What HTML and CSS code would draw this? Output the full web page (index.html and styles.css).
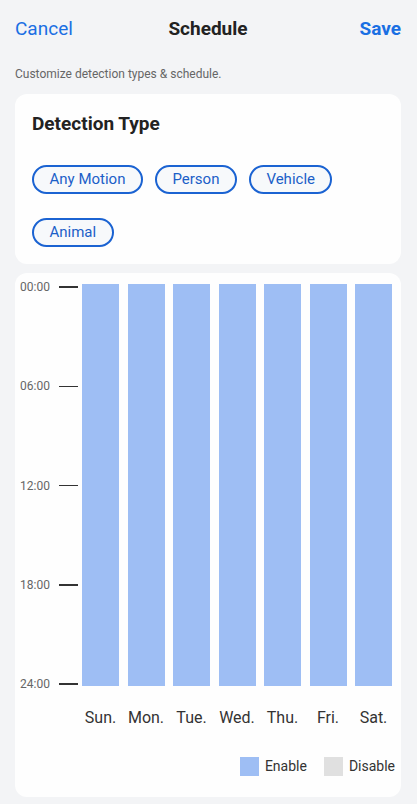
FILE: index.html
```html
<!DOCTYPE html>
<html lang="en">
<head>
  <meta charset="UTF-8">
  <meta name="viewport" content="width=device-width, initial-scale=1.0">
  <title>Schedule</title>
  <link rel="stylesheet" href="styles.css">
</head>
<body>
  <div class="header">
    <span class="header-btn">Cancel</span>
    <span class="header-title">Schedule</span>
    <span class="header-btn save">Save</span>
  </div>
  <p class="subtitle">Customize detection types &amp; schedule.</p>

  <div class="card detection">
    <h2>Detection Type</h2>
    <div class="chips">
      <span class="chip">Any Motion</span>
      <span class="chip">Person</span>
      <span class="chip">Vehicle</span>
      <span class="chip">Animal</span>
    </div>
  </div>

  <div class="card schedule">
    <div class="chart">
      <div class="axis">
        <div class="axis-row"><span class="axis-label">00:00</span><span class="tick"></span></div>
        <div class="axis-row"><span class="axis-label">06:00</span><span class="tick"></span></div>
        <div class="axis-row"><span class="axis-label">12:00</span><span class="tick"></span></div>
        <div class="axis-row"><span class="axis-label">18:00</span><span class="tick"></span></div>
        <div class="axis-row"><span class="axis-label">24:00</span><span class="tick"></span></div>
      </div>
      <div class="bars">
        <div class="bar"></div>
        <div class="bar"></div>
        <div class="bar"></div>
        <div class="bar"></div>
        <div class="bar"></div>
        <div class="bar"></div>
        <div class="bar"></div>
      </div>
    </div>
    <div class="days">
      <span>Sun.</span>
      <span>Mon.</span>
      <span>Tue.</span>
      <span>Wed.</span>
      <span>Thu.</span>
      <span>Fri.</span>
      <span>Sat.</span>
    </div>
    <div class="legend">
      <span class="swatch enable"></span><span class="legend-text">Enable</span>
      <span class="swatch disable"></span><span class="legend-text">Disable</span>
    </div>
  </div>
</body>
</html>
```

FILE: styles.css
```css
body {
  font-family: Roboto, "Noto Sans", sans-serif;
  background-color: #f3f4f6;
  margin: 0;
  color: #222;
}

.header {
  display: grid;
  grid-template-columns: 1fr auto 1fr;
  align-items: center;
  padding: 17px 16px 0 15px;
  height: 24px;
  line-height: 24px;
  font-size: 19px;
}

.header-btn {
  color: #1a6fe3;
}

.header-btn.save {
  font-weight: bold;
  text-align: right;
}

.header-title {
  font-weight: bold;
  color: #222;
}

.subtitle {
  margin: 25px 15px 12px;
  font-size: 12px;
  line-height: 16px;
  color: #666;
}

.card {
  background-color: #fefefe;
  border-radius: 12px;
  margin: 0 16px 9px 15px;
}

.detection {
  padding: 18px 17px 17px;
}

.detection h2 {
  margin: 0 0 29px;
  font-size: 19px;
  line-height: 24px;
  color: #222;
}

.chips {
  display: flex;
  flex-wrap: wrap;
  gap: 24px 12px;
}

.chip {
  display: inline-block;
  height: 25px;
  line-height: 25px;
  padding: 0 15.5px;
  border: 2px solid #1b63d2;
  border-radius: 16px;
  background-color: #f7f9fb;
  color: #1b5fc8;
  font-size: 15px;
}

.schedule {
  padding: 11px 9px 21px 5px;
}

.chart {
  display: flex;
}

.axis {
  width: 62px;
  height: 411px;
  margin-top: -4px;
  display: flex;
  flex-direction: column;
  justify-content: space-between;
}

.axis-row {
  display: flex;
  align-items: center;
  height: 14px;
}

.axis-label {
  width: 39px;
  font-size: 12px;
  color: #666;
}

.tick {
  width: 19px;
  height: 1.5px;
  background-color: #333;
}

.bars {
  flex: 1;
  display: flex;
  gap: 8.5px;
}

.bar {
  flex: 1;
  height: 402px;
  background-color: #9ebef4;
}

.days {
  display: flex;
  gap: 8.5px;
  margin: 16px 0 0 62px;
  font-size: 16px;
  line-height: 22px;
  color: #333;
}

.days span {
  flex: 1;
  text-align: center;
}

.legend {
  display: flex;
  justify-content: flex-end;
  align-items: center;
  margin: 27px -3px 0 0;
  height: 20px;
  font-size: 14px;
  color: #333;
}

.swatch {
  width: 19px;
  height: 19px;
  margin-right: 6px;
}

.swatch.enable {
  background-color: #9ebef4;
}

.swatch.disable {
  background-color: #e0e0e0;
}

.legend-text {
  margin-right: 17px;
}

.legend-text:last-child {
  margin-right: 0;
}
```
